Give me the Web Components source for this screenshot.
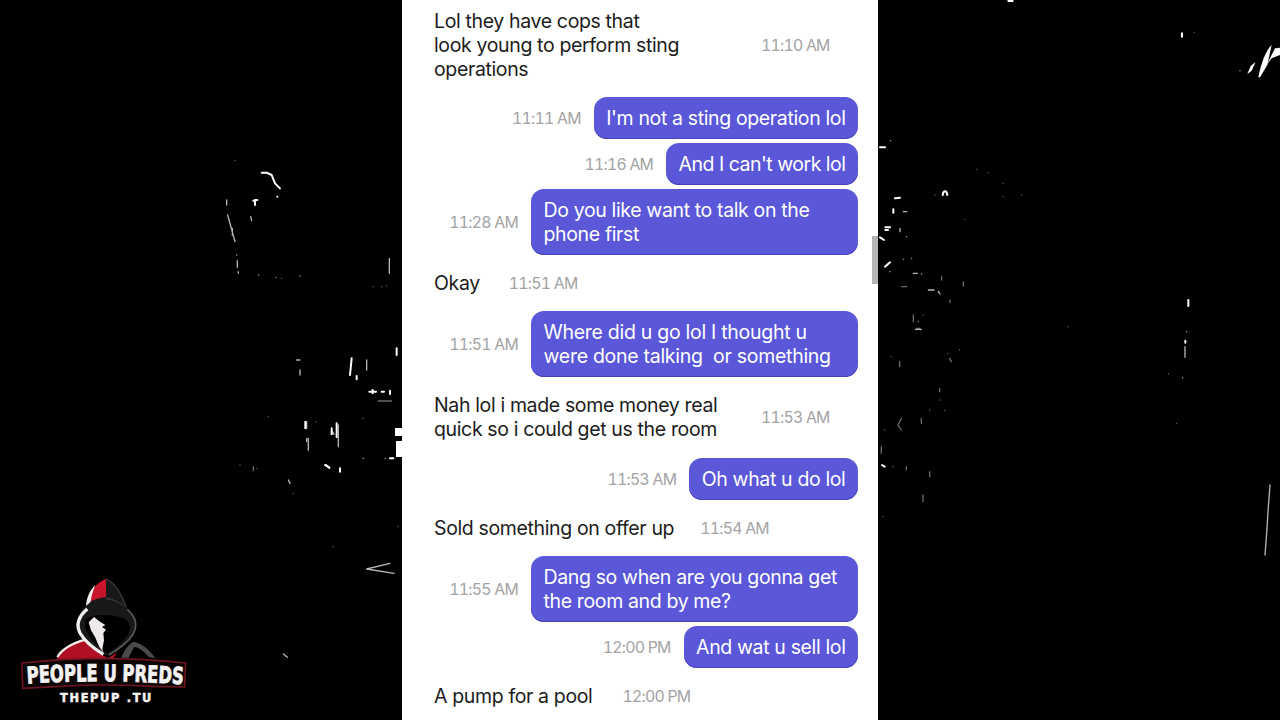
<!DOCTYPE html>
<html lang="en">
<head>
<meta charset="utf-8">
<title>Chat video</title>
<style>
html,body{margin:0;height:100%;background:#000;overflow:hidden}
body{font-family:Inter,"Liberation Sans",sans-serif}
</style>
</head>
<body>
<video-stage>
  <speck-field slot="back"></speck-field>
  <chat-column>
    <chat-row side="in" time="11:10 AM">Lol they have cops that<br>look young to perform sting operations</chat-row>
    <chat-row side="out" time="11:11 AM">I'm not a sting operation lol</chat-row>
    <chat-row side="out" tight style="--ls:-.5px" time="11:16 AM">And I can't work lol</chat-row>
    <chat-row side="out" tight time="11:28 AM">Do you like want to talk on the phone first</chat-row>
    <chat-row side="in" style="--tgap:16px" time="11:51 AM">Okay</chat-row>
    <chat-row side="out" style="--ls:-.28px" time="11:51 AM">Where did u go lol I thought u were done talking&nbsp; or something</chat-row>
    <chat-row side="in" time="11:53 AM">Nah lol i made some money real quick so i could get us the room</chat-row>
    <chat-row side="out" loose time="11:53 AM">Oh what u do lol</chat-row>
    <chat-row side="in" time="11:54 AM">Sold something on offer up</chat-row>
    <chat-row side="out" time="11:55 AM">Dang so when are you gonna get the room and by me?</chat-row>
    <chat-row side="out" tight time="12:00 PM">And wat u sell lol</chat-row>
    <chat-row side="in" style="--tgap:17px" time="12:00 PM">A pump for a pool</chat-row>
  </chat-column>
  <channel-logo slot="over"></channel-logo>
</video-stage>
<script>
class VideoStage extends HTMLElement{
  constructor(){super();this.attachShadow({mode:'open'}).innerHTML=`
  <style>
    :host{display:flex;justify-content:center;position:relative;width:1280px;height:720px;background:#000;overflow:hidden}
  </style>
  <slot name="back"></slot><slot></slot><slot name="over"></slot>`;}
}
class ChatColumn extends HTMLElement{
  constructor(){super();this.attachShadow({mode:'open'}).innerHTML=`
  <style>
    :host{display:flex;flex-direction:column;position:relative;box-sizing:border-box;width:476px;height:720px;padding:9px 20px 0;background:#fff;overflow:hidden}
    .thumb{position:absolute;right:0;top:236px;width:6px;height:48px;background:#b4b4b4}
  </style>
  <slot></slot><div class="thumb"></div>`;}
}
class ChatRow extends HTMLElement{
  constructor(){super();
    const t=this.getAttribute('time');
    this.attachShadow({mode:'open'}).innerHTML=`
  <style>
    :host{display:flex;align-items:center;gap:var(--tgap,13px);margin-top:16px;flex:none}
    :host([tight]){margin-top:4px}
    :host([loose]){margin-top:17px}
    :host(:first-child){margin-top:0}
    :host([side=out]){flex-direction:row-reverse}
    .b{box-sizing:border-box;max-width:326px;padding:0 13px 0 12px;font-size:19.5px;line-height:24px;color:#1c1c1c;letter-spacing:var(--ls,-.36px)}
    :host([side=out]) .b{max-width:327px;padding:9px 12.5px;background:#5a57d9;color:#fff;border-radius:13px;box-shadow:inset 0 -1px 0 #4643b4}
    .t{font-size:15.8px;line-height:24px;padding-top:1px;margin-bottom:-1px;color:#a3a3a3;white-space:nowrap;font-variant-numeric:tabular-nums;letter-spacing:-.75px}
  </style>
  <div class="b"><slot></slot></div><div class="t">${t}</div>`;
  }
}
class SpeckField extends HTMLElement{
  constructor(){super();
    const groups=[
     [200,150,3,
      'M185 68H200L215 75 225 100 240 115M160 152L172 150M165 150V165M232 140h0',
      'M80 150V165M83 195L105 275M97 235V255M152 200L155 212M110 315h0M112 332V352M115 365V370M568 325V370M228 382h0M176 375h0M300 378h0',
      'M105 32h0M245 385h0M520 410h0M545 410h0M560 408h0'],
     [280,340,3,
      'M215 55L210 105M230 108V118M350 25V45M278 150V160M268 155H288M305 155H312M330 152V162M135 375L148 383',
      'M260 60V90M50 60H60M60 90V105M155 270L162 283M175 255V320M80 245V265M85 295V330',
      'M295 183H335M250 355h0M330 355h0M180 385h0M250 235h0'],
     [200,400,3,
      'M316 65V85M410 70V112M395 85V103M378 195L388 203M420 205V215M570 175H580',
      'M320 115V125M325 150h0M265 240L270 250M490 175h0M555 175h0M570 490L500 507 582 520M250 762L262 772',
      'M120 195h0M160 200V212M170 205h0M280 280h0M400 440h0M595 380h0M348 65h0M205 50h0M490 55h0'],
     [860,130,3,
      'M60 52H75M105 205L120 203M100 238V248M248 195C250 180 260 180 262 195M76 292H90M76 300H84M60 322L72 330M90 397L75 410',
      'M130 245H140M92 32h0M120 295V305M140 320h0M130 388h0M155 385h0M160 430H172M185 432h0M205 480H222M235 484L240 492M90 425h0',
      'M245 440V450M125 470H140M270 510V518M160 555V575M190 555h0M310 455V468M170 595H180M430 160h0M430 200h0M485 195h0M350 118h0M385 128h0M315 268h0M225 195h0'],
     [878,320,3,
      'M12 435L20 440',
      'M112 28H130M120 5h0',
      'M65 125V140M215 115L220 125M70 295L60 315 70 330M40 110h0M210 100h0M245 90h0M185 205V215M185 240h0M155 270h0M200 272h0M130 295V310M20 330h0M10 380V400M45 440h0M85 440V450M155 455V470M135 525V545M15 590h0M570 20h0'],
     [1150,280,3,
      'M115 60V78M106 182V188',
      'M110 155h0M105 200V232M98 293h0M360 615L355 680 350 760 345 825',
      'M55 282h0M80 430h0'],
     [1160,0,3,'M66 100V110','M240 212h0','M103 97h0'],
     [1000,0,3,'M25 3H38','','']
    ];
    const svg=groups.map(([x,y,s,w,g,d])=>`<g transform="translate(${x} ${y}) scale(${1/s})" fill="none" stroke-linecap="round" stroke-linejoin="round">
      <path d="${w}" stroke="#fff" stroke-width="6"/><path d="${g}" stroke="#b5b5b5" stroke-width="4"/><path d="${d}" stroke="#6a6a6a" stroke-width="4"/></g>`).join('');
    this.attachShadow({mode:'open'}).innerHTML=`
  <style>:host{display:block;position:absolute;inset:0}svg{display:block;filter:blur(.35px)}</style>
  <svg width="1280" height="720" viewBox="0 0 1280 720">${svg}
    <path d="M395 428H402V436H395ZM396 441H402V457H396Z" fill="#fff"/>
    <g transform="translate(1160 0) scale(.3333)" fill="#fff">
      <path d="M295 232C303 190 318 150 335 135L322 195 300 232Z"/>
      <path d="M320 195L345 145 360 143V165L335 175Z"/>
      <path d="M262 222L272 198 287 186 275 212Z"/>
    </g>
  </svg>`;
  }
}
class ChannelLogo extends HTMLElement{
  constructor(){super();this.attachShadow({mode:'open'}).innerHTML=`
  <style>:host{display:block;position:absolute;left:20px;top:575px;width:170px;height:130px}svg{display:block}</style>
  <svg width="170" height="130" viewBox="0 0 510 390">
    <path d="M112 246C128 220 160 204 196 194L240 236 264 250 292 232 272 262H112Z" fill="#b10f24"/>
    <path d="M112 246C128 220 160 204 196 194" fill="none" stroke="#f1eded" stroke-width="7"/>
    <path d="M304 248C312 226 326 206 342 200 366 206 392 226 406 250L386 246C370 226 354 216 342 216L326 248Z" fill="#4a4a4a"/>
    <path d="M258 12C226 24 206 54 200 86 180 108 170 134 176 160 188 190 214 216 250 236L262 242C292 226 336 196 348 160 352 130 336 110 318 96 306 60 290 28 258 12Z" fill="#181818"/>
    <path d="M258 12C226 24 206 54 202 84 220 74 240 68 258 66Z" fill="#c8152b"/>
    <path d="M226 30C210 46 200 66 198 92 204 88 208 84 212 80 214 62 220 46 226 30Z" fill="#f2eeee"/>
    <path d="M258 12C288 26 306 60 318 96" fill="none" stroke="#3c3c3c" stroke-width="4"/>
    <path d="M258 66C280 70 300 80 318 96L300 86C284 78 270 74 258 74Z" fill="#343434"/>
    <path d="M202 102C176 124 168 150 180 174 194 198 220 220 250 238" fill="none" stroke="#f4f0f0" stroke-width="10"/>
    <path d="M322 104C352 130 352 158 336 182 322 204 296 222 266 240" fill="none" stroke="#595959" stroke-width="5"/>
    <path d="M195 134C216 116 282 114 318 134 346 160 322 196 262 236 234 214 188 176 195 134Z" fill="#000"/>
    <path d="M206 142L222 126 240 140 256 150 246 156 258 164 250 174 252 196 247 222 250 232 238 216 225 186 213 166Z" fill="#efeaea"/>
    <path d="M6 264Q250 238 497 264L494 336 392 334Q250 326 124 334L8 340Z" fill="#0b0506" stroke="#6d1420" stroke-width="5"/>
    <path id="arc" d="M22 326Q250 310 490 328" fill="none"/>
    <text font-family="'DejaVu Sans Condensed','DejaVu Sans',sans-serif" font-weight="700" font-size="70" fill="#f4f2f2" stroke="#f4f2f2" stroke-width="2.5" lengthAdjust="spacingAndGlyphs" textLength="468"><textPath href="#arc">PEOPLE U PREDS</textPath></text>
    <text x="120" y="380" font-family="'DejaVu Sans Condensed','DejaVu Sans',sans-serif" font-weight="700" font-size="38" fill="#f6f4f4" stroke="#f6f4f4" stroke-width="1.5" textLength="274">THEPUP .TU</text>
  </svg>`;}
}
customElements.define('video-stage',VideoStage);
customElements.define('chat-column',ChatColumn);
customElements.define('chat-row',ChatRow);
customElements.define('speck-field',SpeckField);
customElements.define('channel-logo',ChannelLogo);
</script>
</body>
</html>
